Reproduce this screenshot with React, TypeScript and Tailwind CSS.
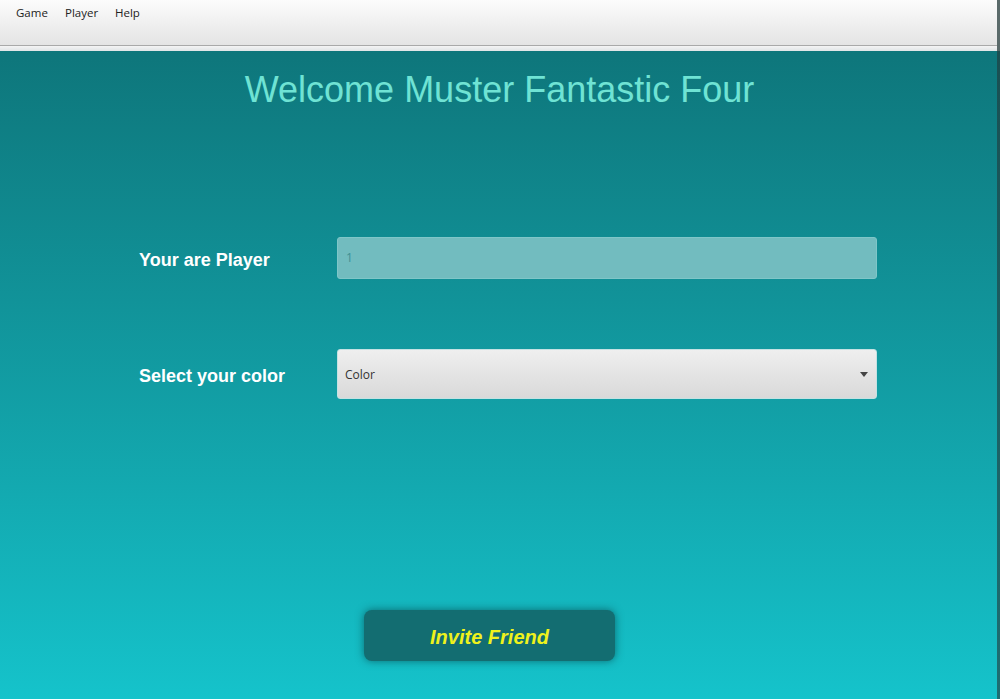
import React from 'react';

const MENU_ITEMS = [
  { label: 'Game', width: 'w-[49px]' },
  { label: 'Player', width: 'w-[50px]' },
  { label: 'Help', width: 'w-[40px]' },
];

function MenuBar() {
  return (
    <div className="flex flex-col">
      <div
        className="h-[45px] bg-gradient-to-b from-[#fcfcfc] to-[#e4e4e4] flex items-start pl-[16px] pt-[5px] text-[11.5px] text-[#222]"
        style={{ fontFamily: '"Open Sans", "Noto Sans", sans-serif' }}
      >
        {MENU_ITEMS.map((item) => (
          <span key={item.label} className={`${item.width} leading-[16px]`}>
            {item.label}
          </span>
        ))}
      </div>
      <div className="h-[1px] bg-[#a9a9a9]" />
      <div className="h-[5px] bg-gradient-to-b from-[#f4f4f4] to-[#e0e4e6]" />
    </div>
  );
}

function FormRow({ label, children }: { label: string; children: React.ReactNode }) {
  return (
    <div className="flex items-center pl-[139px]">
      <div className="w-[198px] pt-[3px] text-[18px] font-bold text-white leading-none">{label}</div>
      <div className="w-[540px]">{children}</div>
    </div>
  );
}

export default function App() {
  return (
    <div
      className="w-[1000px] h-[699px] overflow-hidden flex"
      style={{ fontFamily: '"Liberation Sans", Arial, sans-serif' }}
    >
      <div className="w-[997px] flex flex-col">
        <MenuBar />

        <div className="flex-1 flex flex-col bg-gradient-to-b from-[#0e767b] to-[#15c3cb]">
          {/* Title */}
          <h1 className="mt-[21px] h-[36px] text-[36px] leading-none text-center text-[#6fe3d4] font-normal pl-[2px]">
            Welcome Muster Fantastic Four
          </h1>

          {/* Player number */}
          <div className="mt-[129px]">
            <FormRow label="Your are Player">
              <div className="h-[42px] rounded-[3px] bg-[#72bcbf] border border-[#7fc6c8] flex items-center px-[8px] text-[12px] text-[#3f8f93]"
                style={{ fontFamily: '"Open Sans", "Noto Sans", sans-serif' }}>
                1
              </div>
            </FormRow>
          </div>

          {/* Color picker */}
          <div className="mt-[70px]">
            <FormRow label="Select your color">
              <div
                className="h-[50px] rounded-[3px] bg-gradient-to-b from-[#efefef] to-[#d9d9d9] border border-[#c4e2e3] flex items-center justify-between pl-[7px] pr-[8px] pt-[1px] text-[12px] text-[#333]"
                style={{ fontFamily: '"Open Sans", "Noto Sans", sans-serif' }}
              >
                <span>Color</span>
                <svg width="8" height="5" viewBox="0 0 8 5">
                  <path d="M0 0h8L4 5z" fill="#444" />
                </svg>
              </div>
            </FormRow>
          </div>

          {/* Invite button */}
          <div className="mt-[211px] flex pl-[364px]">
            <button className="w-[251px] h-[51px] rounded-[8px] bg-[#136d71] shadow-[0_0_8px_rgba(0,40,45,0.55)] text-[20px] font-bold italic text-[#eef21c] flex items-center justify-center pt-[3px]">
              Invite Friend
            </button>
          </div>
        </div>
      </div>
      <div className="w-[3px] flex flex-col">
        <div className="h-[51px] bg-[#5a6a6a]" />
        <div className="flex-1 bg-gradient-to-b from-[#1a4f52] to-[#1e6e72]" />
      </div>
    </div>
  );
}
